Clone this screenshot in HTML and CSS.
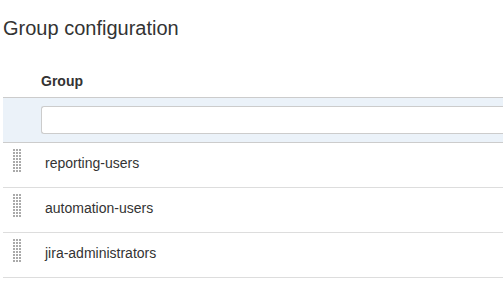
FILE: index.html
```html
<!DOCTYPE html>
<html lang="en">
<head>
    <meta charset="UTF-8">
    <title>Group configuration</title>
    <link rel="stylesheet" href="styles.css">
</head>
<body>
    <div class="page">
        <h1>Group configuration</h1>

        <table class="groups">
            <thead>
                <tr>
                    <th class="handle-col"></th>
                    <th>Group</th>
                </tr>
            </thead>
            <tbody>
                <tr class="create-row">
                    <td class="handle-col"></td>
                    <td><input type="text" class="group-input"></td>
                </tr>
                <tr>
                    <td class="handle-col"><span class="grip"></span></td>
                    <td><span class="group-name">reporting-users</span></td>
                </tr>
                <tr>
                    <td class="handle-col"><span class="grip"></span></td>
                    <td><span class="group-name">automation-users</span></td>
                </tr>
                <tr>
                    <td class="handle-col"><span class="grip"></span></td>
                    <td><span class="group-name">jira-administrators</span></td>
                </tr>
            </tbody>
        </table>
    </div>
</body>
</html>
```

FILE: styles.css
```css
body {
    margin: 0;
    font-family: "Liberation Sans", Arial, sans-serif;
    color: #333;
    background: #fff;
}

.page {
    padding: 0 0 0 3px;
}

h1 {
    margin: 16px 0 0;
    font-size: 20px;
    line-height: 24px;
    font-weight: normal;
    color: #333;
}

.groups {
    margin-top: 20px;
    width: 100%;
    border-collapse: collapse;
    font-size: 14px;
    line-height: 16px;
}

.groups th {
    text-align: left;
    font-weight: bold;
    padding: 13px 0 8px;
    border-bottom: 1px solid #ccc;
}

.groups td {
    height: 44px;
    padding: 0;
    border-bottom: 1px solid #ddd;
    vertical-align: middle;
}

.handle-col {
    width: 38px;
}

.groups td.handle-col {
    vertical-align: top;
}

.create-row td {
    background: #ebf2f9;
    border-bottom-color: #ccc;
}

.group-input {
    display: block;
    box-sizing: border-box;
    width: 100%;
    height: 28px;
    margin: 0;
    border: 1px solid #ccc;
    border-right: none;
    border-radius: 3px 0 0 3px;
    background: #fff;
    font-family: inherit;
    font-size: 14px;
}

.grip {
    display: block;
    width: 9px;
    height: 24px;
    margin: 6px 0 0 10px;
    background-image: radial-gradient(circle at 1px 1px, #aaa 0.9px, transparent 1.1px);
    background-size: 3px 3px;
}

.group-name {
    display: block;
    padding: 0 0 4px 4px;
}
```
